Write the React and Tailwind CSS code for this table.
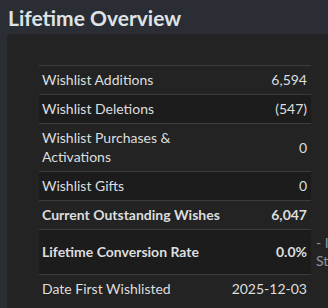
import React from 'react';

const rows = [
  { label: 'Wishlist Additions', value: '6,594' },
  { label: 'Wishlist Deletions', value: '(547)' },
  { label: 'Wishlist Purchases & Activations', value: '0' },
  { label: 'Wishlist Gifts', value: '0' },
  { label: 'Current Outstanding Wishes', value: '6,047', bold: true },
  { label: 'Lifetime Conversion Rate', value: '0.0%', bold: true, note: true },
  { label: 'Date First Wishlisted', value: '2025-12-03' },
];

const App = () => {
  return (
    <div className="w-[328px] h-[308px] overflow-hidden bg-[#2a2d34] font-['Lato',sans-serif]">
      <h2 className="pl-2 pt-[5px] text-[21px] leading-[26px] font-bold text-[#dfe3e6]">
        Lifetime Overview
      </h2>

      <div className="ml-[7px] mt-[3px] w-[420px] h-[300px] bg-[#232323] rounded-tl-[4px] pl-8 pt-[31px]">
        <table className="w-[392px] border-collapse table-fixed text-[14px] leading-[19px] text-[#dcdedf]">
          <colgroup>
            <col className="w-[192px]" />
            <col className="w-[80px]" />
            <col className="w-[120px]" />
          </colgroup>
          <tbody>
            {rows.map((row, i) => (
              <tr key={row.label}>
                <td
                  className={`border-t border-[#3c3c3c] pl-[3px] pr-2 pt-1 pb-[5px] align-middle ${
                    i % 2 === 1 ? 'bg-[#1c1c1c]' : ''
                  } ${row.bold ? 'font-bold' : ''}`}
                >
                  {row.label}
                </td>
                <td
                  className={`border-t border-[#3c3c3c] pr-1 pt-1 pb-[5px] text-right whitespace-nowrap align-middle ${
                    i % 2 === 1 ? 'bg-[#1c1c1c]' : ''
                  } ${row.bold ? 'font-bold' : ''}`}
                >
                  {row.value}
                </td>
                <td className="pl-[5px] pt-1 pb-[5px] leading-[18px] text-[#8f98a0] whitespace-nowrap align-middle">
                  {row.note && (
                    <>
                      - Includes gifts
                      <br />
                      Steam keys
                    </>
                  )}
                </td>
              </tr>
            ))}
          </tbody>
        </table>
      </div>
    </div>
  );
};

export default App;
